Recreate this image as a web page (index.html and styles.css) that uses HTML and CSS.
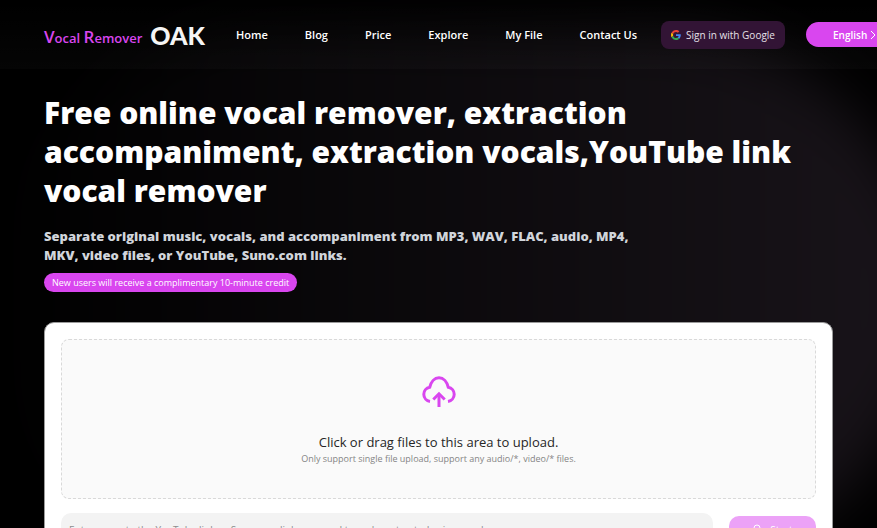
FILE: index.html
```html
<!DOCTYPE html>
<html lang="en">
<head>
  <meta charset="UTF-8">
  <meta name="viewport" content="width=device-width, initial-scale=1.0">
  <title>Vocal Remover OAK</title>
  <link rel="stylesheet" href="styles.css">
</head>
<body>
  <div class="page">
    <header class="header">
      <a class="logo" href="#">
        <span class="logo-name"><b>V</b>ocal <b>R</b>emover</span>
        <span class="logo-mark">OAK</span>
      </a>
      <nav class="nav">
        <a href="#">Home</a>
        <a href="#">Blog</a>
        <a href="#">Price</a>
        <a href="#">Explore</a>
        <a href="#">My File</a>
        <a href="#">Contact Us</a>
      </nav>
      <button class="google-btn" type="button">
        <svg width="10" height="10" viewBox="0 0 48 48" aria-hidden="true">
          <path fill="#EA4335" d="M24 9.500c3.540 0 6.710 1.220 9.210 3.600l6.850-6.850C35.900 2.380 30.470 0 24 0 14.620 0 6.510 5.380 2.560 13.220l7.980 6.190C12.430 13.720 17.740 9.500 24 9.500z"/>
          <path fill="#4285F4" d="M46.980 24.550c0-1.570-.15-3.090-.38-4.550H24v9.020h12.940c-.58 2.960-2.260 5.480-4.780 7.180l7.730 6c4.510-4.180 7.090-10.360 7.090-17.650z"/>
          <path fill="#FBBC05" d="M10.530 28.590c-.48-1.450-.76-2.990-.76-4.590s.27-3.140.76-4.590l-7.980-6.190C.92 16.460 0 20.120 0 24s.92 7.540 2.560 10.780l7.970-6.190z"/>
          <path fill="#34A853" d="M24 48c6.480 0 11.930-2.130 15.890-5.810l-7.730-6c-2.150 1.450-4.920 2.300-8.160 2.300-6.260 0-11.570-4.220-13.470-9.910l-7.980 6.190C6.510 42.620 14.620 48 24 48z"/>
        </svg>
        Sign in with Google
      </button>
      <button class="lang-btn" type="button">
        English
        <svg width="8" height="10" viewBox="0 0 8 10" fill="none" stroke="currentColor" aria-hidden="true">
          <path d="M2 1l4 4-4 4"/>
        </svg>
      </button>
    </header>

    <main class="main">
      <h1>Free online vocal remover, extraction accompaniment, extraction vocals,YouTube link vocal remover</h1>
      <h2>Separate original music, vocals, and accompaniment from MP3, WAV, FLAC, audio, MP4, MKV, video files, or YouTube, Suno.com links.</h2>
      <span class="credit">New users will receive a complimentary 10-minute credit</span>

      <section class="card">
        <button class="dragger" type="button">
          <svg class="upload-icon" width="34" height="32" viewBox="0 0 34 32" fill="none" stroke="currentColor" stroke-width="3" aria-hidden="true">
            <path d="M8 25.500C4.500 25 1.800 22 1.800 18.300c0-3.500 2.500-6.400 5.900-7C9 6 12.500 1.800 17 1.800s8 4.200 9.300 9.500c3.400.6 5.900 3.500 5.900 7 0 3.700-2.700 6.700-6.200 7.200"/>
            <path d="M17 31V19"/>
            <path d="M11.300 23.500l5.700-5.700 5.700 5.700"/>
          </svg>
          <span class="drag-title">Click or drag files to this area to upload.</span>
          <span class="drag-hint">Only support single file upload, support any audio/*, video/* files.</span>
        </button>
        <form class="link-form">
          <input type="text" aria-label="YouTube or Suno.com link" placeholder="Enter or paste the YouTube link or Suno.com link you need to make extracted using vocal">
          <button class="start-btn" type="button" disabled>
            <svg width="12" height="12" viewBox="0 0 12 12" fill="none" stroke="currentColor" aria-hidden="true">
              <circle cx="5" cy="4" r="3"/>
              <path d="M7 6l4 5"/>
            </svg>
            Start
          </button>
        </form>
      </section>
    </main>
  </div>
</body>
</html>
```
FILE: styles.css
```css
* {
  box-sizing: border-box;
  margin: 0;
  padding: 0;
}

body {
  background: #000;
  color: #fff;
  font-family: 'Segoe UI', 'Open Sans', sans-serif;
}

button,
input {
  font-family: inherit;
  border: none;
}

a {
  color: inherit;
  text-decoration: none;
}

.page {
  position: relative;
  overflow: hidden;
}

/* soft glow behind the content */
.page::before {
  content: '';
  position: absolute;
  z-index: -1;
  top: 30px;
  bottom: 40px;
  left: 0;
  right: -50px;
  border-radius: 280px;
  background: linear-gradient(to right, #000, #19141a);
  filter: blur(28px);
}

.header {
  display: flex;
  align-items: center;
  height: 69px;
  padding-left: 44px;
  white-space: nowrap;
  background: linear-gradient(rgba(255, 255, 255, 0), rgba(255, 255, 255, 0.02));
}

.logo {
  display: flex;
  align-items: flex-end;
  gap: 8px;
  width: 192px;
  flex-shrink: 0;
}

.logo-name {
  color: #d946ef;
  font-size: 13px;
  font-weight: 600;
  line-height: 20px;
}

.logo-name b {
  font-size: 17px;
  font-weight: 600;
}

.logo-mark {
  font-family: Lato, sans-serif;
  font-size: 25px;
  font-weight: 900;
  line-height: 26px;
  color: #f5f5f5;
}

.nav {
  display: flex;
  gap: 37px;
  font-size: 11px;
  font-weight: 600;
}

.google-btn,
.lang-btn {
  display: flex;
  align-items: center;
  flex-shrink: 0;
  color: #fff;
  font-size: 10px;
}

.google-btn {
  gap: 5px;
  height: 28px;
  margin-left: 24px;
  padding: 0 10px;
  border-radius: 8px;
  background: #321435;
  color: #e5e0e8;
}

.lang-btn {
  gap: 2px;
  height: 25px;
  margin-left: 21px;
  padding: 0 27px;
  border-radius: 13px;
  background: #d946ef;
  font-weight: 600;
}

.main {
  padding: 24px 44px 44px;
}

h1 {
  font-size: 30px;
  font-weight: 800;
  line-height: 39px;
}

h2 {
  max-width: 610px;
  margin-top: 17px;
  color: #d1d5db;
  font-size: 13px;
  font-weight: 800;
  line-height: 19px;
}

.credit {
  display: table;
  margin-top: 8px;
  padding: 0 8px;
  border-radius: 10px;
  background: #d946ef;
  font-size: 9px;
  line-height: 19px;
}

.card {
  margin-top: 30px;
  padding: 16px;
  border: 1px solid #9b9b9b;
  border-radius: 10px;
  background: #fff;
}

.dragger {
  display: flex;
  flex-direction: column;
  align-items: center;
  width: 100%;
  padding: 36px 16px 33px;
  border: 1px dashed #d9d9d9;
  border-radius: 8px;
  background: #fafafa;
}

.upload-icon {
  color: #d946ef;
}

.drag-title {
  margin-top: 24px;
  color: #262626;
  font-size: 13px;
  line-height: 20px;
}

.drag-hint {
  color: #858585;
  font-size: 9px;
  line-height: 13px;
}

.link-form {
  display: flex;
  align-items: center;
  gap: 16px;
  margin-top: 14px;
}

.link-form input {
  flex: 1;
  height: 33px;
  padding: 0 8px;
  border-radius: 10px;
  background: #f3f3f3;
  font-size: 10px;
}

.link-form input::placeholder {
  color: #8c8c8c;
}

.start-btn {
  display: flex;
  align-items: center;
  justify-content: center;
  gap: 6px;
  width: 87px;
  height: 28px;
  border-radius: 10px;
  background: #eca2f7;
  color: #fff;
  font-size: 10px;
}
```
